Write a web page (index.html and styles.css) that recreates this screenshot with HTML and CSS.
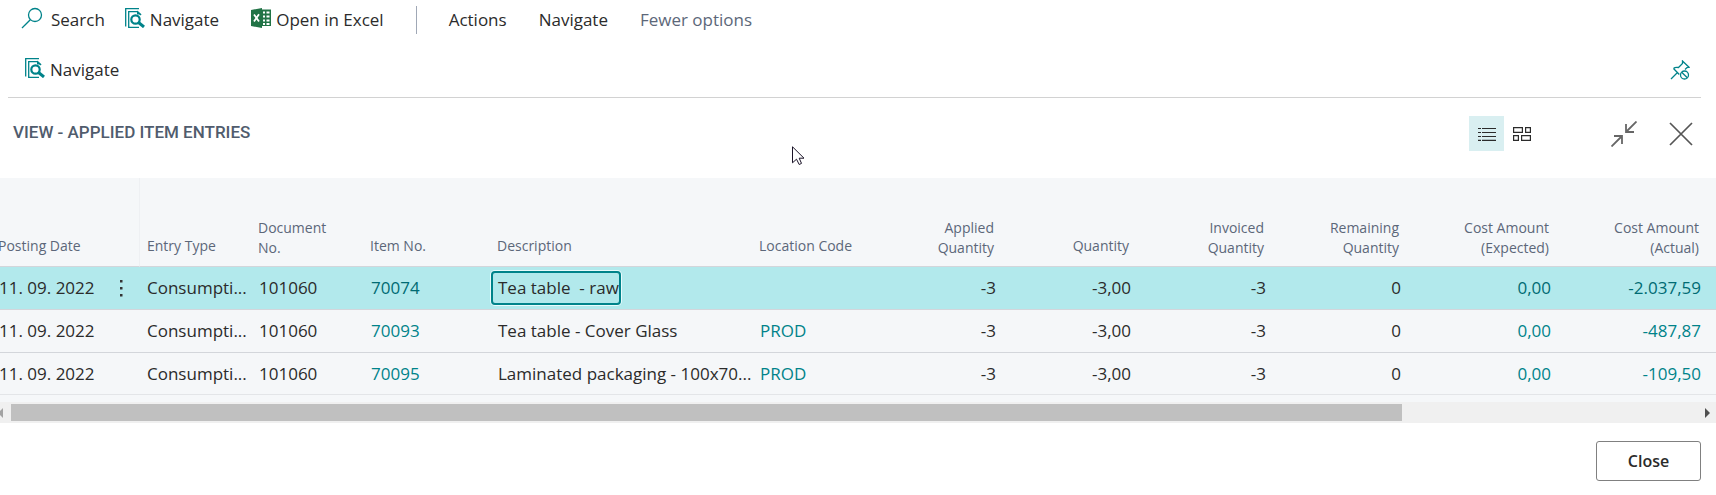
FILE: index.html
```html
<!DOCTYPE html>
<html lang="en">
<head>
    <meta charset="UTF-8">
    <meta name="viewport" content="width=device-width, initial-scale=1.0">
    <title>View - Applied Item Entries</title>
    <link rel="stylesheet" href="styles.css">
</head>
<body>
    <!-- Shared icon -->
    <svg class="symbols" aria-hidden="true">
        <symbol id="icon-navigate" viewBox="0 0 20 20">
            <path d="M.7 18.500V.7H14" fill="none" stroke="#00838a" stroke-width="1.300"/>
            <path d="M14 19.300H3.700V3.700H12.500L16 7" fill="none" stroke="#00838a" stroke-width="1.300"/>
            <path d="M12 2.500L16.500 6.500H12Z" fill="#00838a"/>
            <circle cx="10.500" cy="11.500" r="4.200" fill="#fff" stroke="#00838a" stroke-width="2.200"/>
            <path d="M13.500 14.500L19 19" stroke="#00838a" stroke-width="3"/>
        </symbol>
    </svg>

    <!-- Action bar -->
    <nav class="toolbar">
        <button class="action search">
            <svg width="22" height="22" viewBox="0 0 22 22" fill="none" stroke="#00838a" stroke-width="1.300"><circle cx="14" cy="8" r="6.500"/><path d="M9.300 12.700L1 21"/></svg>
            Search
        </button>
        <button class="action first-navigate"><svg width="20" height="20"><use href="#icon-navigate"/></svg>Navigate</button>
        <button class="action excel">
            <svg width="20" height="20" viewBox="0 0 20 20">
                <path d="M0 2L11 0V20L0 18Z" fill="#217346"/>
                <path d="M11 1.500H20V18H11Z" fill="#217346"/>
                <path d="M12 4.500H14M12 8.500H14M12 12.500H14M12 16H14M15.500 4.500H18.500M15.500 8.500H18.500M15.500 12.500H18.500M15.500 16H18.500" stroke="#fff" stroke-width="2"/>
                <path d="M3 6.500L8 13.500M8 6.300L3 13.500" stroke="#fff" stroke-width="1.800"/>
            </svg>
            Open in Excel
        </button>
        <span class="divider"></span>
        <button class="action">Actions</button>
        <button class="action">Navigate</button>
        <button class="action muted">Fewer options</button>
    </nav>
    <div class="subbar">
        <button class="action"><svg width="20" height="20"><use href="#icon-navigate"/></svg>Navigate</button>
        <button class="icon-button" aria-label="Unpin">
            <svg width="20" height="20" viewBox="0 0 20 20" fill="none" stroke="#00838a" stroke-width="1.300">
                <path d="M1 19L7.500 12.500M3.500 8.500L9.300 14.500M3.500 8.500C5 7 7 7.200 8.500 7.500L12.500 3.500V1L19 7.200L17 7.500L15 9.500"/>
                <circle cx="14.500" cy="15" r="4"/><path d="M11.700 12.200L17.300 17.800"/>
            </svg>
        </button>
    </div>

    <!-- Page title -->
    <header class="heading">
        <h1>VIEW - APPLIED ITEM ENTRIES</h1>
        <div class="view-buttons">
            <button class="view-button selected" aria-label="List view">
                <svg width="18" height="14" viewBox="0 0 18 14" stroke="#2b2b2b" stroke-width="1.200"><path d="M0 1.500H3M4 1.500H18M0 5.500H3M4 5.500H18M0 9.500H3M4 9.500H18M0 13.400H3M4 13.400H18"/></svg>
            </button>
            <button class="view-button" aria-label="Tile view">
                <svg width="18" height="14" viewBox="0 0 18 14" fill="none" stroke="#2b2b2b" stroke-width="1.200"><path d="M.6 .6H9.400V5.400H.6ZM12.600 .6H17.400V5.400H12.600ZM.6 8.600H5.400V13.400H.6ZM8.600 8.600H17.400V13.400H8.600Z"/></svg>
            </button>
        </div>
        <button class="icon-button collapse" aria-label="Collapse">
            <svg width="26" height="26" viewBox="0 0 26 26" fill="none" stroke="#666" stroke-width="1.800"><path d="M25.500 .5L15.500 10.500M15 3V11H23M.5 25.500L10.500 15.500M3 15H11V23"/></svg>
        </button>
        <button class="icon-button" aria-label="Close page">
            <svg width="24" height="24" viewBox="0 0 24 24" stroke="#555" stroke-width="1.700"><path d="M1 1L23 23M23 1L1 23"/></svg>
        </button>
        <svg class="cursor" width="13" height="20" viewBox="0 0 13 20" fill="#fff" stroke="#1b1428" stroke-width="1"><path d="M.5 .8V16.800L4.500 13.200L7.200 18.500L9.500 17.400L7.200 12.200H12Z"/></svg>
    </header>

    <!-- Entries -->
    <main class="grid">
        <table>
            <colgroup>
                <col class="date"><col class="menu"><col class="code"><col class="code"><col class="item"><col><col class="location">
                <col class="quantity"><col class="quantity"><col class="quantity"><col class="quantity"><col class="amount"><col class="last">
            </colgroup>
            <thead>
                <tr>
                    <th>Posting Date</th>
                    <th></th>
                    <th class="edge">Entry Type</th>
                    <th class="two-line">Document<br>No.</th>
                    <th>Item No.</th>
                    <th>Description</th>
                    <th>Location Code</th>
                    <th class="number two-line">Applied<br>Quantity</th>
                    <th class="number">Quantity</th>
                    <th class="number two-line">Invoiced<br>Quantity</th>
                    <th class="number two-line">Remaining<br>Quantity</th>
                    <th class="number two-line">Cost Amount<br>(Expected)</th>
                    <th class="number two-line">Cost Amount<br>(Actual)</th>
                </tr>
            </thead>
            <tbody>
                <tr class="selected">
                    <td>11. 09. 2022</td>
                    <td class="menu-cell"><button class="row-menu" aria-label="Row menu"><svg width="3" height="17" viewBox="0 0 3 17" fill="#333"><path d="M0 0H2.500V2.500H0ZM0 7H2.500V9.500H0ZM0 14H2.500V16.500H0Z"/></svg></button></td>
                    <td>Consumpti...</td>
                    <td>101060</td>
                    <td><a href="#">70074</a></td>
                    <td class="focus-cell"><span class="focused" tabindex="0">Tea table  - raw</span></td>
                    <td></td>
                    <td class="number">-3</td>
                    <td class="number">-3,00</td>
                    <td class="number">-3</td>
                    <td class="number">0</td>
                    <td class="number"><a href="#">0,00</a></td>
                    <td class="number"><a href="#">-2.037,59</a></td>
                </tr>
                <tr>
                    <td>11. 09. 2022</td>
                    <td></td>
                    <td>Consumpti...</td>
                    <td>101060</td>
                    <td><a href="#">70093</a></td>
                    <td>Tea table - Cover Glass</td>
                    <td><a href="#">PROD</a></td>
                    <td class="number">-3</td>
                    <td class="number">-3,00</td>
                    <td class="number">-3</td>
                    <td class="number">0</td>
                    <td class="number"><a href="#">0,00</a></td>
                    <td class="number"><a href="#">-487,87</a></td>
                </tr>
                <tr>
                    <td>11. 09. 2022</td>
                    <td></td>
                    <td>Consumpti...</td>
                    <td>101060</td>
                    <td><a href="#">70095</a></td>
                    <td>Laminated packaging - 100x70...</td>
                    <td><a href="#">PROD</a></td>
                    <td class="number">-3</td>
                    <td class="number">-3,00</td>
                    <td class="number">-3</td>
                    <td class="number">0</td>
                    <td class="number"><a href="#">0,00</a></td>
                    <td class="number"><a href="#">-109,50</a></td>
                </tr>
            </tbody>
        </table>
        <div class="scrollbar">
            <svg width="3" height="10" viewBox="0 0 3 10" fill="#a3a3a3"><path d="M3 0V10L0 7V3Z"/></svg>
            <div class="track"><div class="thumb"></div></div>
            <svg width="5" height="10" viewBox="0 0 5 10" fill="#505050"><path d="M0 0L5 5L0 10Z"/></svg>
        </div>
    </main>

    <footer>
        <button class="close">Close</button>
    </footer>
</body>
</html>
```
FILE: styles.css
```css
* {
    box-sizing: border-box;
}

body {
    margin: 0;
    background-color: #fff;
    color: #2b2b2b;
    font-family: "Open Sans", "Noto Sans", sans-serif;
    font-size: 17px;
    line-height: 24px;
    overflow: hidden;
}

button {
    padding: 0;
    border: none;
    background: none;
    color: inherit;
    font: inherit;
}

svg {
    display: block;
    flex: none;
}

a {
    color: #00838a;
    text-decoration: none;
}

.symbols {
    position: absolute;
    width: 0;
    height: 0;
}

/* Action bar */
.toolbar {
    display: flex;
    align-items: center;
    gap: 32px;
    height: 40px;
    padding-left: 21px;
}

.action {
    display: flex;
    align-items: center;
    gap: 5px;
    white-space: nowrap;
}

.action svg {
    margin-bottom: 4px;
}

.search {
    gap: 8px;
}

.first-navigate {
    margin-left: -12px;
}

.divider {
    width: 1px;
    height: 28px;
    background-color: #a0a8b6;
}

.muted {
    color: #5c6779;
}

.subbar {
    display: flex;
    align-items: center;
    justify-content: space-between;
    height: 58px;
    margin: 0 15px 0 8px;
    padding: 3px 11px 0 17px;
    border-bottom: 1px solid #d2d2d2;
}

/* Page title */
.heading {
    position: relative;
    display: flex;
    align-items: center;
    height: 80px;
    padding: 0 23px 9px 13px;
}

h1 {
    flex: 1;
    margin: 0;
    padding-bottom: 4px;
    color: #505c6d;
    font-family: Roboto, sans-serif;
    font-size: 17px;
    font-weight: 500;
}

.view-buttons {
    display: flex;
    margin-right: 72px;
}

.view-button {
    display: flex;
    align-items: center;
    justify-content: center;
    width: 35px;
    height: 35px;
}

.view-button.selected {
    background-color: #d9eff1;
}

.collapse {
    margin-right: 32px;
}

.cursor {
    position: absolute;
    left: 792px;
    top: 48px;
}

/* Entries */
.grid {
    background-color: #f5f7f9;
    overflow: hidden;
}

table {
    width: calc(100% + 9px);
    margin-left: -9px;
    table-layout: fixed;
    border-collapse: separate;
    border-spacing: 0;
}

.date {
    width: 112px;
}

.menu {
    width: 36px;
}

.code {
    width: 112px;
}

.item {
    width: 127px;
}

.location {
    width: 117px;
}

.quantity {
    width: 135px;
}

.amount {
    width: 150px;
}

.last {
    width: 157px;
}

th, td {
    padding: 0 8px;
    border-bottom: 1px solid #d3d6db;
    text-align: left;
    white-space: nowrap;
}

th {
    height: 89px;
    padding-bottom: 10px;
    padding-left: 7px;
    color: #5c6779;
    font-size: 14px;
    font-weight: 400;
    line-height: 20px;
    vertical-align: bottom;
}

th.two-line {
    padding-bottom: 8px;
}

th.edge {
    border-left: 1px solid #eef0f3;
}

td {
    height: 43px;
}

tbody tr:last-child td {
    height: 42px;
    border-bottom-color: #e3e5e8;
}

.number {
    text-align: right;
}

th.number {
    padding-right: 10px;
}

.number:last-child {
    padding-right: 15px;
}

th.number:last-child {
    padding-right: 17px;
}

tr.selected {
    background-color: #b2e9ec;
}

tr.selected a {
    color: #006b73;
}

.row-menu {
    display: flex;
    margin-left: 9px;
}

td.focus-cell {
    padding-left: 1px;
}

.focused {
    display: block;
    width: max-content;
    height: 34px;
    padding-left: 5px;
    border: 2px solid #00838a;
    border-radius: 4px;
    box-shadow: 0 0 0 1px #e9fbfc;
    line-height: 30px;
    white-space: pre;
}

.scrollbar {
    display: flex;
    align-items: center;
    height: 21px;
    margin-top: 7px;
    padding-right: 6px;
    background-color: #f0f0f0;
}

.track {
    flex: 1;
    margin: 0 8px;
}

.thumb {
    width: 82.500%;
    height: 17px;
    background-color: #c0c0c0;
}

footer {
    display: flex;
    justify-content: flex-end;
    padding: 18px 15px 15px;
}

.close {
    width: 105px;
    height: 40px;
    border: 1px solid #808080;
    border-radius: 3px;
    font-size: 16px;
    font-weight: 600;
}
```
